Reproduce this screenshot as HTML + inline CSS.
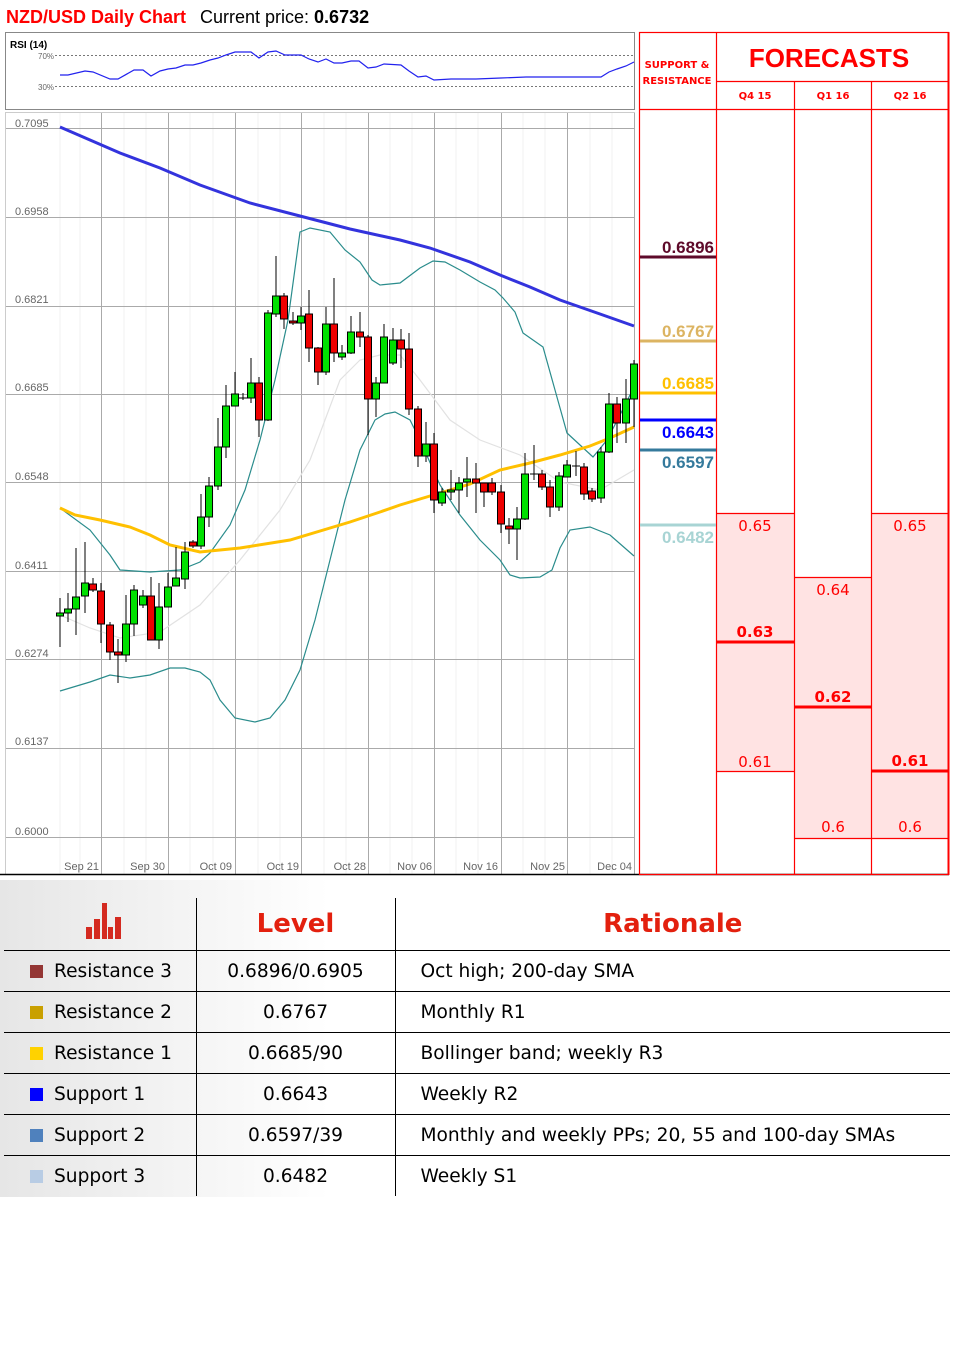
<!DOCTYPE html>
<html><head><meta charset="utf-8"><style>
body{margin:0;width:963px;height:1368px;background:#fff;font-family:"Liberation Sans",sans-serif;position:relative;overflow:hidden}
.t{position:absolute;left:0;top:0}
table{position:absolute;left:4px;top:898px;border-collapse:collapse;font-family:"DejaVu Sans","Liberation Sans",sans-serif;font-size:18.6px;color:#000}
td{height:40px;padding:0;border-top:1px solid #000;vertical-align:middle}
td.a{width:192px;border-right:1px solid #000;padding-left:26px;box-sizing:border-box}
td.b{width:198px;border-right:1px solid #000;text-align:center}
td.c{width:555px;padding-left:25px;box-sizing:border-box}
tr.h td{height:52px;border-top:none;font-family:"DejaVu Sans",sans-serif;font-weight:bold;color:#e3200e;font-size:26px}
.sq{display:inline-block;width:13px;height:13px;margin-right:11px;vertical-align:-1px}
</style></head><body>
<div style="position:absolute;left:0;top:880px;width:330px;height:317px;background:linear-gradient(90deg,#e6e6e6,#f4f4f4 55%,#fff)"></div>
<svg class="t" width="963" height="880" xmlns="http://www.w3.org/2000/svg" font-family="Liberation Sans, sans-serif">
<text x="6" y="23" font-size="18" font-weight="bold" fill="#ff0000">NZD/USD Daily Chart</text>
<text x="200" y="23" font-size="18" fill="#000">Current price: <tspan font-weight="bold">0.6732</tspan></text>
<rect x="5.5" y="32.5" width="629" height="77" fill="#fff" stroke="#888"/>
<text x="10" y="48" font-size="10" font-weight="bold">RSI (14)</text>
<text x="38" y="59" font-size="8" fill="#666">70%</text>
<text x="38" y="90" font-size="8" fill="#666">30%</text>
<line x1="55" y1="55.5" x2="634" y2="55.5" stroke="#777" stroke-dasharray="2,2"/>
<line x1="55" y1="86.5" x2="634" y2="86.5" stroke="#777" stroke-dasharray="2,2"/>
<polyline fill="none" stroke="#2222ee" stroke-width="1.2" points="60,75 68,75 85,71 93,72 110,79 118,79 134,70 143,70 151,76 160,71 168,69 176,68 185,65 193,65 201,63 210,60 218,58 226,55 235,52 243,52 251,52 259,58 268,52 276,51 285,55 301,55 309,59 318,62 326,59 334,63 342,63 351,61 359,61 368,68 376,67 384,64 401,65 409,71 418,77 426,76 434,80 451,79 476,79 501,78 526,77 551,77 576,77 584,77 601,77 609,72 617,69 626,66 634,62"/>
<rect x="5.5" y="112.5" width="629" height="762" fill="#fff" stroke="#ccc"/>
<g stroke="#f0f0f0" stroke-width="1">
<line x1="60" y1="113" x2="60" y2="874"/><line x1="80" y1="113" x2="80" y2="874"/><line x1="124" y1="113" x2="124" y2="874"/><line x1="146" y1="113" x2="146" y2="874"/><line x1="190" y1="113" x2="190" y2="874"/><line x1="213" y1="113" x2="213" y2="874"/><line x1="258" y1="113" x2="258" y2="874"/><line x1="280" y1="113" x2="280" y2="874"/><line x1="324" y1="113" x2="324" y2="874"/><line x1="346" y1="113" x2="346" y2="874"/><line x1="390" y1="113" x2="390" y2="874"/><line x1="412" y1="113" x2="412" y2="874"/><line x1="456" y1="113" x2="456" y2="874"/><line x1="478" y1="113" x2="478" y2="874"/><line x1="523" y1="113" x2="523" y2="874"/><line x1="545" y1="113" x2="545" y2="874"/><line x1="590" y1="113" x2="590" y2="874"/><line x1="612" y1="113" x2="612" y2="874"/>
</g>
<g stroke="#aaa" stroke-width="1">
<line x1="101.5" y1="113" x2="101.5" y2="874"/><line x1="168.5" y1="113" x2="168.5" y2="874"/><line x1="235.5" y1="113" x2="235.5" y2="874"/><line x1="301.5" y1="113" x2="301.5" y2="874"/><line x1="368.5" y1="113" x2="368.5" y2="874"/><line x1="434.5" y1="113" x2="434.5" y2="874"/><line x1="501.5" y1="113" x2="501.5" y2="874"/><line x1="567.5" y1="113" x2="567.5" y2="874"/><line x1="634.5" y1="113" x2="634.5" y2="874"/>
<line x1="6" y1="128.5" x2="634" y2="128.5"/><line x1="6" y1="217.5" x2="634" y2="217.5"/><line x1="6" y1="306.5" x2="634" y2="306.5"/><line x1="6" y1="394.5" x2="634" y2="394.5"/><line x1="6" y1="482.5" x2="634" y2="482.5"/><line x1="6" y1="571.5" x2="634" y2="571.5"/><line x1="6" y1="659.5" x2="634" y2="659.5"/><line x1="6" y1="748.5" x2="634" y2="748.5"/><line x1="6" y1="837.5" x2="634" y2="837.5"/>
</g>
<g font-size="11" fill="#666">
<text x="15" y="127">0.7095</text><text x="15" y="215">0.6958</text><text x="15" y="303">0.6821</text><text x="15" y="391">0.6685</text><text x="15" y="480">0.6548</text><text x="15" y="569">0.6411</text><text x="15" y="657">0.6274</text><text x="15" y="745">0.6137</text><text x="15" y="835">0.6000</text>
<text x="99" y="870" text-anchor="end">Sep 21</text><text x="165" y="870" text-anchor="end">Sep 30</text><text x="232" y="870" text-anchor="end">Oct 09</text><text x="299" y="870" text-anchor="end">Oct 19</text><text x="366" y="870" text-anchor="end">Oct 28</text><text x="432" y="870" text-anchor="end">Nov 06</text><text x="498" y="870" text-anchor="end">Nov 16</text><text x="565" y="870" text-anchor="end">Nov 25</text><text x="632" y="870" text-anchor="end">Dec 04</text>
</g>
<line x1="0" y1="874.5" x2="949" y2="874.5" stroke="#000" stroke-width="1.5"/>
<polyline fill="none" stroke="#e2e2e2" stroke-width="1.2" points="60,615 90,628 120,638 160,632 200,605 240,560 280,510 310,460 340,380 360,360 380,355 400,355 420,380 450,420 480,440 520,455 560,482 600,490 634,470"/>
<polyline fill="none" stroke="#2a8c8c" stroke-width="1.2" points="60,508 90,530 110,555 120,570 150,572 180,570 200,562 210,553 230,525 245,490 260,440 275,380 288,320 300,232 310,228 330,232 345,250 360,262 372,280 380,285 400,283 420,268 433,261 445,262 460,270 480,282 495,290 503,298 515,312 523,333 543,347 555,390 567,433 580,445 593,457 607,440 620,415 635,385"/>
<polyline fill="none" stroke="#2a8c8c" stroke-width="1.2" points="60,691 90,682 110,675 130,678 150,675 170,668 185,668 200,672 210,680 220,700 235,718 255,722 270,718 285,700 300,670 315,620 330,560 345,500 360,450 375,420 385,414 395,412 410,420 420,440 440,485 460,515 480,540 500,560 510,575 520,578 540,577 552,570 560,548 570,530 590,527 610,535 634,556"/>
<polyline fill="none" stroke="#3333dd" stroke-width="3" points="60,127 90,140 120,153 160,168 200,185 250,203 300,216 350,229 400,240 430,248 470,262 500,275 530,287 560,300 600,314 634,326"/>
<polyline fill="none" stroke="#ffc000" stroke-width="3" points="60,508 75,515 100,520 130,527 150,535 170,545 200,552 240,548 290,540 350,522 380,512 400,505 440,493 470,484 500,470 530,463 560,455 590,446 610,438 634,427"/>
<g stroke="#000" stroke-width="1">
<line x1="60" y1="598" x2="60" y2="647"/><rect x="56.5" y="613" width="7" height="3" fill="#00e000"/>
<line x1="68" y1="593" x2="68" y2="622"/><rect x="64.5" y="609" width="7" height="4" fill="#00e000"/>
<line x1="76" y1="548" x2="76" y2="635"/><rect x="72.5" y="597" width="7" height="12" fill="#00e000"/>
<line x1="85" y1="542" x2="85" y2="613"/><rect x="81.5" y="583" width="7" height="13" fill="#00e000"/>
<line x1="93" y1="578" x2="93" y2="592"/><rect x="89.5" y="584" width="7" height="6" fill="#ee0000"/>
<line x1="101" y1="583" x2="101" y2="643"/><rect x="97.5" y="591" width="7" height="33" fill="#ee0000"/>
<line x1="110" y1="622" x2="110" y2="660"/><rect x="106.5" y="625" width="7" height="27" fill="#ee0000"/>
<line x1="118" y1="639" x2="118" y2="683"/><rect x="114.5" y="652" width="7" height="3" fill="#ee0000"/>
<line x1="126" y1="595" x2="126" y2="662"/><rect x="122.5" y="624" width="7" height="31" fill="#00e000"/>
<line x1="134" y1="585" x2="134" y2="636"/><rect x="130.5" y="590" width="7" height="34" fill="#00e000"/>
<line x1="143" y1="590" x2="143" y2="608"/><rect x="139.5" y="596" width="7" height="9" fill="#00e000"/>
<line x1="151" y1="577" x2="151" y2="640"/><rect x="147.5" y="596" width="7" height="44" fill="#ee0000"/>
<line x1="159" y1="583" x2="159" y2="649"/><rect x="155.5" y="607" width="7" height="33" fill="#00e000"/>
<line x1="168" y1="573" x2="168" y2="607"/><rect x="164.5" y="587" width="7" height="20" fill="#00e000"/>
<line x1="176" y1="547" x2="176" y2="586"/><rect x="172.5" y="578" width="7" height="8" fill="#00e000"/>
<line x1="185" y1="542" x2="185" y2="589"/><rect x="181.5" y="552" width="7" height="27" fill="#00e000"/>
<line x1="193" y1="540" x2="193" y2="548"/><rect x="189.5" y="542" width="7" height="4" fill="#ee0000"/>
<line x1="201" y1="494" x2="201" y2="549"/><rect x="197.5" y="517" width="7" height="29" fill="#00e000"/>
<line x1="209" y1="477" x2="209" y2="527"/><rect x="205.5" y="486" width="7" height="31" fill="#00e000"/>
<line x1="218" y1="418" x2="218" y2="490"/><rect x="214.5" y="447" width="7" height="39" fill="#00e000"/>
<line x1="226" y1="385" x2="226" y2="458"/><rect x="222.5" y="406" width="7" height="41" fill="#00e000"/>
<line x1="235" y1="372" x2="235" y2="406"/><rect x="231.5" y="394" width="7" height="12" fill="#00e000"/>
<line x1="243" y1="393" x2="243" y2="400"/><line x1="239" y1="398" x2="247" y2="398"/>
<line x1="251" y1="358" x2="251" y2="403"/><rect x="247.5" y="383" width="7" height="15" fill="#00e000"/>
<line x1="259" y1="377" x2="259" y2="437"/><rect x="255.5" y="383" width="7" height="37" fill="#ee0000"/>
<line x1="268" y1="310" x2="268" y2="421"/><rect x="264.5" y="313" width="7" height="107" fill="#00e000"/>
<line x1="276" y1="256" x2="276" y2="317"/><rect x="272.5" y="296" width="7" height="18" fill="#00e000"/>
<line x1="284" y1="293" x2="284" y2="329"/><rect x="280.5" y="296" width="7" height="23" fill="#ee0000"/>
<line x1="293" y1="312" x2="293" y2="325"/><rect x="289.5" y="321" width="7" height="2" fill="#ee0000"/>
<line x1="301" y1="307" x2="301" y2="330"/><rect x="297.5" y="316" width="7" height="7" fill="#00e000"/>
<line x1="309" y1="290" x2="309" y2="362"/><rect x="305.5" y="314" width="7" height="34" fill="#ee0000"/>
<line x1="318" y1="347" x2="318" y2="385"/><rect x="314.5" y="348" width="7" height="24" fill="#ee0000"/>
<line x1="326" y1="307" x2="326" y2="375"/><rect x="322.5" y="324" width="7" height="48" fill="#00e000"/>
<line x1="334" y1="278" x2="334" y2="362"/><rect x="330.5" y="324" width="7" height="29" fill="#ee0000"/>
<line x1="342" y1="345" x2="342" y2="360"/><rect x="338.5" y="353" width="7" height="4" fill="#00e000"/>
<line x1="351" y1="316" x2="351" y2="354"/><rect x="347.5" y="332" width="7" height="21" fill="#00e000"/>
<line x1="360" y1="312" x2="360" y2="347"/><rect x="356.5" y="332" width="7" height="5" fill="#ee0000"/>
<line x1="368" y1="335" x2="368" y2="435"/><rect x="364.5" y="337" width="7" height="62" fill="#ee0000"/>
<line x1="376" y1="377" x2="376" y2="417"/><rect x="372.5" y="383" width="7" height="16" fill="#00e000"/>
<line x1="384" y1="324" x2="384" y2="383"/><rect x="380.5" y="337" width="7" height="46" fill="#00e000"/>
<line x1="393" y1="328" x2="393" y2="365"/><rect x="389.5" y="340" width="7" height="23" fill="#00e000"/>
<line x1="401" y1="329" x2="401" y2="368"/><rect x="397.5" y="340" width="7" height="9" fill="#ee0000"/>
<line x1="409" y1="333" x2="409" y2="415"/><rect x="405.5" y="349" width="7" height="60" fill="#ee0000"/>
<line x1="418" y1="406" x2="418" y2="467"/><rect x="414.5" y="409" width="7" height="47" fill="#ee0000"/>
<line x1="426" y1="422" x2="426" y2="462"/><rect x="422.5" y="444" width="7" height="12" fill="#00e000"/>
<line x1="434" y1="433" x2="434" y2="513"/><rect x="430.5" y="444" width="7" height="56" fill="#ee0000"/>
<line x1="442" y1="488" x2="442" y2="506"/><rect x="438.5" y="492" width="7" height="11" fill="#00e000"/>
<line x1="451" y1="470" x2="451" y2="500"/><rect x="447.5" y="490" width="7" height="2" fill="#00e000"/>
<line x1="459" y1="477" x2="459" y2="513"/><rect x="455.5" y="483" width="7" height="7" fill="#00e000"/>
<line x1="467" y1="457" x2="467" y2="497"/><rect x="463.5" y="479" width="7" height="3" fill="#00e000"/>
<line x1="476" y1="463" x2="476" y2="513"/><rect x="472.5" y="479" width="7" height="4" fill="#ee0000"/>
<line x1="484" y1="483" x2="484" y2="507"/><rect x="480.5" y="483" width="7" height="9" fill="#ee0000"/>
<line x1="492" y1="478" x2="492" y2="495"/><rect x="488.5" y="483" width="7" height="9" fill="#ee0000"/>
<line x1="501" y1="485" x2="501" y2="533"/><rect x="497.5" y="492" width="7" height="32" fill="#ee0000"/>
<line x1="509" y1="518" x2="509" y2="544"/><rect x="505.5" y="526" width="7" height="3" fill="#ee0000"/>
<line x1="517" y1="507" x2="517" y2="560"/><rect x="513.5" y="519" width="7" height="10" fill="#00e000"/>
<line x1="525" y1="453" x2="525" y2="520"/><rect x="521.5" y="474" width="7" height="45" fill="#00e000"/>
<line x1="534" y1="445" x2="534" y2="480"/><line x1="530" y1="474" x2="538" y2="474"/>
<line x1="542" y1="470" x2="542" y2="490"/><rect x="538.5" y="474" width="7" height="13" fill="#ee0000"/>
<line x1="550" y1="480" x2="550" y2="517"/><rect x="546.5" y="487" width="7" height="20" fill="#ee0000"/>
<line x1="559" y1="472" x2="559" y2="511"/><rect x="555.5" y="476" width="7" height="31" fill="#00e000"/>
<line x1="567" y1="460" x2="567" y2="477"/><rect x="563.5" y="465" width="7" height="12" fill="#00e000"/>
<line x1="576" y1="451" x2="576" y2="476"/><line x1="572" y1="466" x2="580" y2="466"/>
<line x1="584" y1="463" x2="584" y2="500"/><rect x="580.5" y="467" width="7" height="27" fill="#ee0000"/>
<line x1="592" y1="488" x2="592" y2="502"/><rect x="588.5" y="491" width="7" height="8" fill="#ee0000"/>
<line x1="601" y1="447" x2="601" y2="503"/><rect x="597.5" y="452" width="7" height="46" fill="#00e000"/>
<line x1="609" y1="393" x2="609" y2="453"/><rect x="605.5" y="404" width="7" height="48" fill="#00e000"/>
<line x1="617" y1="397" x2="617" y2="443"/><rect x="613.5" y="404" width="7" height="19" fill="#ee0000"/>
<line x1="626" y1="379" x2="626" y2="443"/><rect x="622.5" y="399" width="7" height="24" fill="#00e000"/>
<line x1="634" y1="360" x2="634" y2="427"/><rect x="630.5" y="364" width="7" height="35" fill="#00e000"/>
</g>
<rect x="717" y="513" width="77" height="258" fill="#ffe3e3"/>
<rect x="795" y="577" width="76" height="261" fill="#ffe3e3"/>
<rect x="872" y="513" width="77" height="325" fill="#ffe3e3"/>
<g stroke="#ff0000" stroke-width="1.2" fill="none">
<rect x="639.5" y="32.5" width="309" height="842"/>
<line x1="716.5" y1="32" x2="716.5" y2="874"/>
<line x1="794.5" y1="81" x2="794.5" y2="874"/>
<line x1="871.5" y1="81" x2="871.5" y2="874"/>
<line x1="716" y1="81.5" x2="949" y2="81.5"/>
<line x1="639" y1="109.5" x2="949" y2="109.5"/>
<line x1="716" y1="513.5" x2="794" y2="513.5"/><line x1="716" y1="771.5" x2="794" y2="771.5"/>
<line x1="794" y1="577.5" x2="871" y2="577.5"/><line x1="794" y1="838.5" x2="949" y2="838.5"/>
<line x1="871" y1="513.5" x2="949" y2="513.5"/>
</g>
<line x1="948.5" y1="32" x2="948.5" y2="875" stroke="#ff0000" stroke-width="2"/>
<g stroke="#ff0000" stroke-width="3"><line x1="717" y1="642" x2="794" y2="642"/><line x1="795" y1="707" x2="871" y2="707"/><line x1="872" y1="771" x2="948" y2="771"/></g>
<g fill="#ff0000" font-family="DejaVu Sans, sans-serif" text-anchor="middle">
<text x="677" y="68" font-size="10" font-weight="bold">SUPPORT &amp;</text>
<text x="677" y="84" font-size="10" font-weight="bold">RESISTANCE</text>
<text x="829" y="67" font-size="26" font-weight="bold" font-family="Liberation Sans, sans-serif">FORECASTS</text>
<text x="755" y="99" font-size="10" font-weight="bold">Q4 15</text>
<text x="833" y="99" font-size="10" font-weight="bold">Q1 16</text>
<text x="910" y="99" font-size="10" font-weight="bold">Q2 16</text>
<g font-size="15"><text x="755" y="531">0.65</text><text x="910" y="531">0.65</text><text x="833" y="595">0.64</text><text x="755" y="767">0.61</text><text x="833" y="832">0.6</text><text x="910" y="832">0.6</text></g>
<g font-size="15" font-weight="bold"><text x="755" y="637">0.63</text><text x="833" y="702">0.62</text><text x="910" y="766">0.61</text></g>
</g>
<g font-size="17" font-weight="bold" text-anchor="end" font-family="Liberation Sans, sans-serif">
<text x="714" y="253" fill="#5e0a2a">0.6896</text>
<text x="714" y="337" fill="#dcb462">0.6767</text>
<text x="714" y="389" fill="#ffc000">0.6685</text>
<text x="714" y="438" fill="#0000ff">0.6643</text>
<text x="714" y="468" fill="#357a9c">0.6597</text>
<text x="714" y="543" fill="#a8d4d4">0.6482</text>
</g>
<g stroke-width="3"><line x1="640" y1="257" x2="716" y2="257" stroke="#5e0a2a"/><line x1="640" y1="341" x2="716" y2="341" stroke="#dcb462"/><line x1="640" y1="393" x2="716" y2="393" stroke="#ffc000"/><line x1="640" y1="420" x2="716" y2="420" stroke="#0000ff"/><line x1="640" y1="450" x2="716" y2="450" stroke="#357a9c"/><line x1="640" y1="525" x2="716" y2="525" stroke="#a8d4d4"/></g>
</svg>
<table>
<tr class="h"><td class="a" style="padding-left:80px"><svg width="38" height="36" viewBox="0 0 38 36"><g fill="#d42a20"><rect x="2" y="24" width="6" height="12"/><rect x="10" y="16" width="6" height="20"/><rect x="18" y="0" width="5" height="36"/><rect x="24" y="24" width="5" height="12"/><rect x="31" y="14" width="6" height="22"/></g></svg></td><td class="b">Level</td><td class="c" style="text-align:center;padding-left:0">Rationale</td></tr>
<tr><td class="a"><span class="sq" style="background:#943634"></span>Resistance 3</td><td class="b">0.6896/0.6905</td><td class="c">Oct high; 200-day SMA</td></tr>
<tr><td class="a"><span class="sq" style="background:#c9a000"></span>Resistance 2</td><td class="b">0.6767</td><td class="c">Monthly R1</td></tr>
<tr><td class="a"><span class="sq" style="background:#ffd200"></span>Resistance 1</td><td class="b">0.6685/90</td><td class="c">Bollinger band; weekly R3</td></tr>
<tr><td class="a"><span class="sq" style="background:#0000ff"></span>Support 1</td><td class="b">0.6643</td><td class="c">Weekly R2</td></tr>
<tr><td class="a"><span class="sq" style="background:#4f81bd"></span>Support 2</td><td class="b">0.6597/39</td><td class="c">Monthly and weekly PPs; 20, 55 and 100-day SMAs</td></tr>
<tr><td class="a"><span class="sq" style="background:#b8cce4"></span>Support 3</td><td class="b">0.6482</td><td class="c">Weekly S1</td></tr>
</table>
</body></html>
